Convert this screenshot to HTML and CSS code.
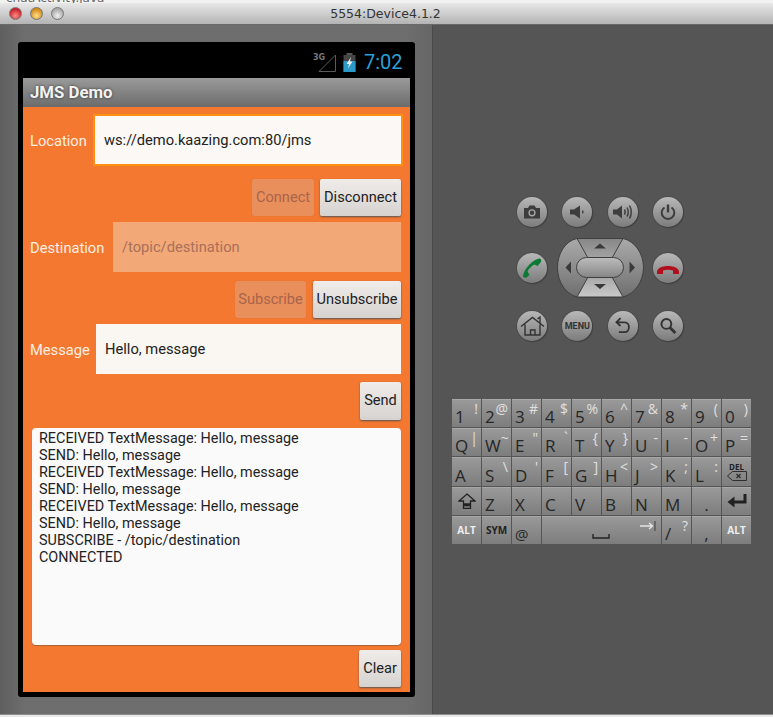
FILE: index.html
```html
<!DOCTYPE html>
<html lang="en">
<head>
    <meta charset="UTF-8">
    <meta name="viewport" content="width=device-width, initial-scale=1.0">
    <title>5554:Device4.1.2</title>
    <link rel="stylesheet" href="styles.css">
</head>
<body>
    <div class="behind"><span>chatActivity.java</span></div>
    <div class="window">
        <div class="titlebar">
            <span class="light red"></span>
            <span class="light amber"></span>
            <span class="light off"></span>
            <div class="title">5554:Device4.1.2</div>
        </div>
        <div class="main">
            <div class="device-side">
                <div class="screen">
                    <div class="statusbar">
                        <svg class="signal" width="24" height="20" viewBox="0 0 24 20">
                            <text x="0" y="8" class="net">3G</text>
                            <path d="M6 19.5 L22.5 3 V19.5 Z" fill="none" stroke="#5a5a5a" stroke-width="1"/>
                        </svg>
                        <svg class="battery" width="13" height="19" viewBox="0 0 13 19">
                            <rect x="3.5" y="0" width="6" height="2" fill="#555"/>
                            <rect x="0.5" y="2" width="12" height="17" fill="#444"/>
                            <rect x="0.5" y="8" width="12" height="11" fill="#2a9ac9"/>
                            <path d="M8 4 L3.5 11 H6 L5 15.5 L9.5 8.5 H7 Z" fill="#eee"/>
                        </svg>
                        <span class="clock">7:02</span>
                    </div>
                    <div class="actionbar">JMS Demo</div>
                    <div class="app">
                        <div class="field-row row-location">
                            <label class="field-label">Location</label>
                            <div class="field focused">ws://demo.kaazing.com:80/jms</div>
                        </div>
                        <div class="button-row row-connect">
                            <button class="btn disabled btn-connect">Connect</button>
                            <button class="btn btn-disconnect">Disconnect</button>
                        </div>
                        <div class="field-row row-destination">
                            <label class="field-label">Destination</label>
                            <div class="field field-disabled">/topic/destination</div>
                        </div>
                        <div class="button-row row-subscribe">
                            <button class="btn disabled btn-subscribe">Subscribe</button>
                            <button class="btn btn-unsubscribe">Unsubscribe</button>
                        </div>
                        <div class="field-row row-message">
                            <label class="field-label">Message</label>
                            <div class="field">Hello, message</div>
                        </div>
                        <div class="button-row row-send">
                            <button class="btn btn-send">Send</button>
                        </div>
                        <div class="log">
                            <div>RECEIVED TextMessage: Hello, message</div>
                            <div>SEND: Hello, message</div>
                            <div>RECEIVED TextMessage: Hello, message</div>
                            <div>SEND: Hello, message</div>
                            <div>RECEIVED TextMessage: Hello, message</div>
                            <div>SEND: Hello, message</div>
                            <div>SUBSCRIBE - /topic/destination</div>
                            <div>CONNECTED</div>
                        </div>
                        <div class="button-row row-clear">
                            <button class="btn btn-clear">Clear</button>
                        </div>
                    </div>
                </div>
            </div>
            <div class="controls-side">
                <div class="hw-buttons">
                    <div class="hw"><svg width="20" height="20" viewBox="0 0 20 20"><path d="M2 6 H6 L7.5 3.5 H12.5 L14 6 H18 V16.5 H2 Z" fill="#3d3d3d"/><circle cx="10" cy="10.8" r="3.6" fill="#a8a8a8"/><circle cx="10" cy="10.8" r="2.2" fill="#3d3d3d"/></svg></div>
                    <div class="hw"><svg width="20" height="20" viewBox="0 0 20 20"><path d="M3 7.5 H7 L13 3.5 V16.5 L7 12.5 H3 Z" fill="#3d3d3d"/><path d="M15.5 8.5 Q16.3 10 15.5 11.5" fill="none" stroke="#3d3d3d" stroke-width="1.4"/></svg></div>
                    <div class="hw"><svg width="22" height="20" viewBox="0 0 22 20"><path d="M1 7.5 H5 L10 3.5 V16.5 L5 12.5 H1 Z" fill="#3d3d3d"/><path d="M12.5 7.5 Q14 10 12.5 12.5 M15 5.5 Q17.5 10 15 14.5 M17.5 3.5 Q21 10 17.5 16.5" fill="none" stroke="#3d3d3d" stroke-width="1.5"/></svg></div>
                    <div class="hw"><svg width="20" height="20" viewBox="0 0 20 20"><path d="M6.5 5.5 A6.3 6.3 0 1 0 13.5 5.5" fill="none" stroke="#3d3d3d" stroke-width="2"/><path d="M10 2.5 V10.5" stroke="#3d3d3d" stroke-width="2.4"/></svg></div>
                </div>
                <div class="hw-middle">
                    <div class="hw"><svg width="24" height="24" viewBox="0 0 24 24"><path d="M19.5 2.5 C13 3.5 4 12.5 3 20 C3 21.5 5 22 6.5 21.5 L9.5 19 L7.5 15.5 C9 12.5 11.5 10 14.5 8.5 L17.5 10 L21 6 C21.5 4.5 21 2.5 19.5 2.5 Z" fill="#0d7a33"/></svg></div>
                    <svg class="dpad" width="87" height="60" viewBox="0 0 87 60">
                        <defs>
                            <linearGradient id="sidefill" x1="0" y1="0" x2="0" y2="1">
                                <stop offset="0" stop-color="#aaa"/>
                                <stop offset="1" stop-color="#6f6f6f"/>
                            </linearGradient>
                            <linearGradient id="topfill" x1="0" y1="0" x2="0" y2="1">
                                <stop offset="0" stop-color="#868686"/>
                                <stop offset="1" stop-color="#a4a4a4"/>
                            </linearGradient>
                            <linearGradient id="bottomfill" x1="0" y1="0" x2="0" y2="1">
                                <stop offset="0" stop-color="#a8a8a8"/>
                                <stop offset="1" stop-color="#cacaca"/>
                            </linearGradient>
                            <linearGradient id="centerfill" x1="0" y1="0" x2="0" y2="1">
                                <stop offset="0" stop-color="#bdbdbd"/>
                                <stop offset="1" stop-color="#858585"/>
                            </linearGradient>
                        </defs>
                        <path d="M20 .5 H66 C78 3 86.5 16 86.5 29.5 C86.5 43 78 56 66 59 H20 C8 56 .5 43 .5 29.5 C.5 16 8 3 20 .5 Z" fill="url(#sidefill)" stroke="#3f3f3f"/>
                        <path d="M20 .5 H66 L55 20 H31 Z" fill="url(#topfill)" stroke="#3f3f3f"/>
                        <path d="M20 59 H66 L55 39 H31 Z" fill="url(#bottomfill)" stroke="#3f3f3f"/>
                        <rect x="19.5" y="19.5" width="47" height="20" rx="10" fill="url(#centerfill)" stroke="#3f3f3f"/>
                        <path d="M43 5.5 L49 10.5 H37 Z M43 51 L49 46 H37 Z M8.5 29.5 L14 23.5 V35.5 Z M78 29.5 L72.5 23.5 V35.5 Z" fill="#3a3a3a"/>
                    </svg>
                    <div class="hw"><svg width="24" height="24" viewBox="0 0 24 24"><path d="M1 16 C1 8 23 8 23 16 V18 H17 V14.5 C14 13.5 10 13.5 7 14.5 V18 H1 Z" fill="#b0101c"/></svg></div>
                </div>
                <div class="hw-buttons">
                    <div class="hw"><svg width="25" height="20" viewBox="0 0 25 20"><path d="M1 10.5 L12.5 1.5 L24 10.5 M5 8.5 V19 H20 V8.5 M10.5 19 V14 H15 V19 M17.5 3 L20 1 V7" fill="none" stroke="#333" stroke-width="1.4"/></svg></div>
                    <div class="hw hw-menu">MENU</div>
                    <div class="hw"><svg width="18" height="18" viewBox="0 0 22 22"><path d="M8 1.5 L3 6.5 L8 11 M3.5 6.5 H13 C20 6.5 20 18.5 13 18.5 H6" fill="none" stroke="#333" stroke-width="2.2"/></svg></div>
                    <div class="hw"><svg width="18" height="18" viewBox="0 0 22 22"><circle cx="9" cy="8.5" r="6" fill="none" stroke="#333" stroke-width="2.4"/><path d="M13 12.5 L20 19.5" stroke="#333" stroke-width="3.4"/></svg></div>
                </div>
                <div class="keyboard">
                    <div class="key"><span class="cap">1</span><span class="alt">!</span></div>
                    <div class="key"><span class="cap">2</span><span class="alt">@</span></div>
                    <div class="key"><span class="cap">3</span><span class="alt">#</span></div>
                    <div class="key"><span class="cap">4</span><span class="alt">$</span></div>
                    <div class="key"><span class="cap">5</span><span class="alt">%</span></div>
                    <div class="key"><span class="cap">6</span><span class="alt">^</span></div>
                    <div class="key"><span class="cap">7</span><span class="alt">&amp;</span></div>
                    <div class="key"><span class="cap">8</span><span class="alt">*</span></div>
                    <div class="key"><span class="cap">9</span><span class="alt">(</span></div>
                    <div class="key"><span class="cap">0</span><span class="alt">)</span></div>

                    <div class="key"><span class="cap">Q</span><span class="alt">|</span></div>
                    <div class="key"><span class="cap">W</span><span class="alt">~</span></div>
                    <div class="key"><span class="cap">E</span><span class="alt">"</span></div>
                    <div class="key"><span class="cap">R</span><span class="alt">`</span></div>
                    <div class="key"><span class="cap">T</span><span class="alt">{</span></div>
                    <div class="key"><span class="cap">Y</span><span class="alt">}</span></div>
                    <div class="key"><span class="cap">U</span><span class="alt">-</span></div>
                    <div class="key"><span class="cap">I</span><span class="alt">-</span></div>
                    <div class="key"><span class="cap">O</span><span class="alt">+</span></div>
                    <div class="key"><span class="cap">P</span><span class="alt">=</span></div>

                    <div class="key"><span class="cap">A</span></div>
                    <div class="key"><span class="cap">S</span><span class="alt">\</span></div>
                    <div class="key"><span class="cap">D</span><span class="alt">'</span></div>
                    <div class="key"><span class="cap">F</span><span class="alt">[</span></div>
                    <div class="key"><span class="cap">G</span><span class="alt">]</span></div>
                    <div class="key"><span class="cap">H</span><span class="alt">&lt;</span></div>
                    <div class="key"><span class="cap">J</span><span class="alt">&gt;</span></div>
                    <div class="key"><span class="cap">K</span><span class="alt">;</span></div>
                    <div class="key"><span class="cap">L</span><span class="alt">:</span></div>
                    <div class="key key-del">
                        <span class="del-text">DEL</span>
                        <svg width="20" height="10" viewBox="0 0 20 10"><path d="M5.5 .5 H19.5 V9.5 H5.5 L.5 5 Z" fill="none" stroke="#2e2e2e"/><path d="M9.5 3 L13.5 7 M13.5 3 L9.5 7" stroke="#2e2e2e" stroke-width="1.3"/></svg>
                    </div>

                    <div class="key key-icon"><svg width="18" height="16" viewBox="0 0 18 16"><path d="M9 1 L17 8 H12.5 V11 H5.5 V8 H1 Z M5.5 12.5 H12.5 V15.5 H5.5 Z" fill="none" stroke="#222" stroke-width="1.3"/></svg></div>
                    <div class="key"><span class="cap">Z</span></div>
                    <div class="key"><span class="cap">X</span></div>
                    <div class="key"><span class="cap">C</span></div>
                    <div class="key"><span class="cap">V</span></div>
                    <div class="key"><span class="cap">B</span></div>
                    <div class="key"><span class="cap">N</span></div>
                    <div class="key"><span class="cap">M</span></div>
                    <div class="key key-dot"><span class="cap">.</span></div>
                    <div class="key key-icon"><svg width="20" height="16" viewBox="0 0 20 16"><path d="M18 1 V9 H6" fill="none" stroke="#222" stroke-width="3"/><path d="M7.5 3.5 V14.5 L.5 9 Z" fill="#222"/></svg></div>

                    <div class="key key-word light-word">ALT</div>
                    <div class="key key-word">SYM</div>
                    <div class="key key-at"><span class="cap">@</span></div>
                    <div class="key key-space">
                        <svg class="tab-mark" width="16" height="10" viewBox="0 0 16 10"><path d="M0 5 H12 M9 2 L12.5 5 L9 8" fill="none" stroke="#e4e4e4" stroke-width="1.4"/><path d="M15 0 V10" stroke="#555" stroke-width="1.4"/></svg>
                        <svg class="space-mark" width="18" height="5" viewBox="0 0 18 5"><path d="M1 0 V4 H17 V0" fill="none" stroke="#222" stroke-width="1.4"/></svg>
                    </div>
                    <div class="key"><span class="cap">/</span><span class="alt">?</span></div>
                    <div class="key key-dot"><span class="cap">,</span></div>
                    <div class="key key-word light-word">ALT</div>
                </div>
            </div>
        </div>
    </div>
</body>
</html>
```
FILE: styles.css
```css
html, body {
    margin: 0;
    padding: 0;
}
body {
    width: 773px;
    height: 717px;
    overflow: hidden;
    background-color: #e9e9e9;
    font-family: Roboto, sans-serif;
}
.behind {
    height: 3px;
    overflow: hidden;
    padding-left: 6px;
    font-family: "DejaVu Sans", sans-serif;
    font-size: 12px;
    line-height: 12px;
    color: #666;
    background-color: #f2f2f2;
}
.behind span {
    display: block;
    margin-top: -8px;
}
.window {
    height: 711px;
    border-radius: 4px 4px 0 0;
    overflow: hidden;
    border-bottom: 1px solid #8d8d8d;
}
.titlebar {
    height: 21px;
    display: flex;
    align-items: center;
    gap: 8px;
    padding-left: 9px;
    background: linear-gradient(#e8e8e8, #b4b4b4);
    border-bottom: 1px solid #6a6a6a;
    position: relative;
}
.light {
    width: 11px;
    height: 11px;
    border-radius: 50%;
    border: 0.5px solid #777;
}
.red { background: radial-gradient(circle at 50% 70%, #ff8d86, #c9202a 70%); }
.amber { background: radial-gradient(circle at 50% 70%, #ffdf86, #d08a1c 70%); }
.off { background: radial-gradient(circle at 50% 70%, #f0f0f0, #a8a8a8 70%); }
.title {
    position: absolute;
    left: 0;
    right: 2px;
    text-align: center;
    font-family: "DejaVu Sans", sans-serif;
    font-size: 12.5px;
    color: #333;
}
.main {
    display: flex;
    height: 689px;
}
.device-side {
    width: 433px;
    box-sizing: border-box;
    padding: 17px 0 0 18px;
    background: linear-gradient(90deg, #5f5f5f, #6e6e6e 6%, #6e6e6e 94%, #666);
    border-right: 1px solid #4a4a4a;
}
.screen {
    width: 397px;
    height: 655px;
    box-sizing: border-box;
    padding: 0 5px 5px;
    background-color: #000;
    border-radius: 3px;
    display: flex;
    flex-direction: column;
}
.statusbar {
    height: 36px;
    display: flex;
    align-items: center;
    justify-content: flex-end;
    padding-top: 4px;
    box-sizing: border-box;
}
.signal {
    margin-right: 6px;
}
.net {
    font-family: "DejaVu Sans", sans-serif;
    font-size: 8px;
    font-weight: bold;
    fill: #777;
}
.battery {
    margin-right: 8px;
}
.clock {
    font-size: 20px;
    color: #2a9fd6;
    margin-right: 7px;
    width: 39px;
}
.actionbar {
    height: 29px;
    line-height: 28px;
    padding-left: 7px;
    font-size: 16.8px;
    font-weight: bold;
    color: #f2f2f2;
    text-shadow: 0 0 3px #333;
    background: linear-gradient(#9a9a9a, #6c6c6c);
    box-sizing: border-box;
}
.app {
    flex: 1;
    background-color: #f47830;
    padding: 0 9px 0 7px;
    font-size: 14.7px;
    display: flex;
    flex-direction: column;
}
.field-row {
    display: flex;
    align-items: center;
}
.field-label {
    color: #fdeee2;
    white-space: nowrap;
    padding-top: 1px;
}
.field {
    flex: 1;
    box-sizing: border-box;
    background-color: #faf6f2;
    color: #222;
    padding: 0 0 0 9px;
    font-size: 14.7px;
    display: flex;
    align-items: center;
}
.row-location { height: 52px; margin-top: 7px; }
.row-location .field-label { width: 63px; }
.focused {
    height: 52px;
    border: 2px solid #ff9012;
    margin-right: -2px;
    background-color: #fbf8f5;
}
.row-destination { height: 50px; margin-top: 6px; }
.row-destination .field-label { width: 83px; }
.field-disabled {
    height: 50px;
    background-color: #f3a878;
    color: #a9705a;
}
.row-message { height: 50px; margin-top: 6px; }
.row-message .field-label { width: 66px; }
.row-message .field { height: 50px; }
.button-row {
    display: flex;
    justify-content: flex-end;
    gap: 6px;
}
.btn {
    height: 37px;
    padding: 0 0 2px;
    border: none;
    border-radius: 2px;
    font-family: Roboto, sans-serif;
    font-size: 14.6px;
    color: #222;
    background: linear-gradient(#efecea, #d6d2cf);
    box-shadow: 0 1px 2px #555;
}
.btn.disabled {
    color: #a9644a;
    background: #e98f5c;
    box-shadow: 0 0 1px #b8673a;
}
.row-connect { margin-top: 13px; }
.btn-connect { width: 62px; }
.btn-disconnect { width: 81px; }
.row-subscribe { margin-top: 9px; gap: 7px; }
.btn-subscribe { width: 71px; }
.btn-unsubscribe { width: 88px; }
.row-send { margin-top: 8px; }
.btn-send { width: 41px; height: 38px; }
.log {
    height: 217px;
    margin: 8px 0 0 2px;
    box-sizing: border-box;
    padding: 2px 0 0 7px;
    background-color: #fbfafa;
    border-radius: 4px;
    font-size: 14.4px;
    line-height: 17px;
    color: #222;
    box-shadow: 0 1px 1px #a8623a;
}
.row-clear { margin-top: 5px; }
.btn-clear { width: 42px; }

.controls-side {
    flex: 1;
    background-color: #555;
    position: relative;
    padding-top: 171px;
    box-sizing: border-box;
}
.hw-buttons,
.hw-middle {
    display: flex;
    align-items: center;
    margin-left: 84px;
    width: 166px;
}
.hw-buttons {
    justify-content: space-between;
    height: 32px;
}
.hw-middle {
    justify-content: space-between;
    height: 62px;
    margin-top: 9px;
    margin-bottom: 11px;
}
.hw {
    width: 30px;
    height: 30px;
    border-radius: 50%;
    background: linear-gradient(#b8b8b8, #7c7c7c);
    box-shadow: 1px 1px 1px #3f3f3f, 0 0 0 1px #4d4d4d;
    display: flex;
    align-items: center;
    justify-content: center;
}
.hw-menu {
    font-size: 9px;
    font-weight: bold;
    color: #333;
}
.keyboard {
    display: grid;
    grid-template-columns: repeat(10, 29px);
    grid-auto-rows: 28.2px;
    gap: 1px;
    margin: 57px 0 0 19px;
    width: 300px;
}
.key {
    display: flex;
    justify-content: space-between;
    padding: 0 3px;
    box-sizing: border-box;
    background: linear-gradient(#999, #7d7d7d);
    border-top: 1px solid #a8a8a8;
    overflow: hidden;
    font-family: "Open Sans", sans-serif;
}
.cap {
    font-size: 17px;
    color: #262626;
    align-self: flex-end;
    line-height: 20px;
}
.alt {
    font-size: 14px;
    color: #e0e0e0;
    line-height: 17px;
}
.key-del {
    flex-direction: column;
    align-items: center;
    justify-content: center;
    padding: 0;
}
.del-text {
    font-size: 8px;
    font-weight: bold;
    line-height: 9px;
    color: #222;
}
.key-icon,
.key-word {
    justify-content: center;
    align-items: center;
}
.key-word {
    font-size: 10px;
    font-weight: bold;
    color: #222;
}
.light-word {
    color: #eee;
}
.key-dot {
    justify-content: center;
}
.key-at .cap {
    font-size: 15px;
}
.key-space {
    grid-column: span 4;
    position: relative;
}
.tab-mark {
    position: absolute;
    right: 5px;
    top: 4px;
}
.space-mark {
    position: absolute;
    left: 50px;
    bottom: 5px;
}
```
